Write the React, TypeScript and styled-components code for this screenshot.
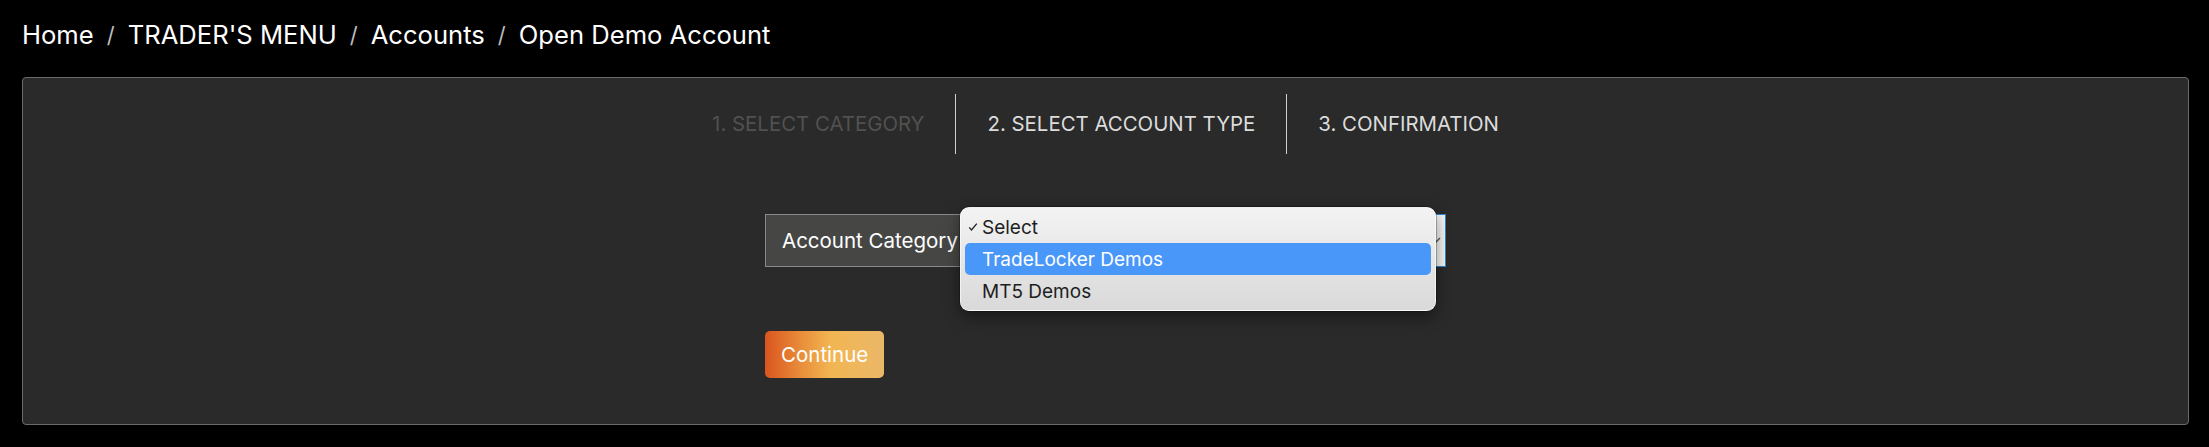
import { useState } from 'react';
import styled, { createGlobalStyle } from 'styled-components';

const GlobalStyle = createGlobalStyle`
	html, body {
		margin: 0;
		padding: 0;
		background: #000;
		font-family: Inter, 'Liberation Sans', Arial, sans-serif;
	}
	* {
		box-sizing: border-box;
	}
`;

const crumbs = ['Home', "TRADER'S MENU", 'Accounts', 'Open Demo Account'];
const steps = ['1. SELECT CATEGORY', '2. SELECT ACCOUNT TYPE', '3. CONFIRMATION'];
const categories = ['Select', 'TradeLocker Demos', 'MT5 Demos'];

const App = () => {
	const [activeStep] = useState(1);
	const [selected] = useState(0);
	const [hovered, setHovered] = useState(1);

	return (
		<Page>
			<GlobalStyle />
			<Breadcrumb>
				{crumbs.map((crumb, index) => (
					<Crumb key={crumb}>
						{index > 0 && <Divider>/</Divider>}
						{crumb}
					</Crumb>
				))}
			</Breadcrumb>

			<Card>
				<StepList>
					{steps.map((step, index) => (
						<Step key={step} $first={index === 0} $done={index < activeStep}>
							{step}
						</Step>
					))}
				</StepList>

				<Form>
					<InputGroup>
						<GroupLabel>Account Category</GroupLabel>
						<SelectBox>
							<Chevron viewBox='0 0 10 6'>
								<path d='M1 1l4 4 4-4' fill='none' stroke='#555' strokeWidth='1.4' />
							</Chevron>
							<Menu>
								{categories.map((option, index) => (
									<Option
										key={option}
										$active={index === hovered}
										onMouseEnter={() => setHovered(index)}
									>
										<Tick>
											{index === selected && (
												<svg viewBox='0 0 10 10' width='10' height='10'>
													<path
														d='M1.2 5.4l2.3 2.6L8.8 1.6'
														fill='none'
														stroke='currentColor'
														strokeWidth='1.3'
													/>
												</svg>
											)}
										</Tick>
										{option}
									</Option>
								))}
							</Menu>
						</SelectBox>
					</InputGroup>

					<ContinueButton>Continue</ContinueButton>
				</Form>
			</Card>
		</Page>
	);
};

export default App;

const Page = styled.div`
	width: 2209px;
	height: 447px;
	padding: 0 20px 0 22px;
	background: #000;
`;

const Breadcrumb = styled.ol`
	display: flex;
	align-items: center;
	height: 77px;
	margin: 0;
	padding: 0 0 8px 0;
	list-style: none;
`;

const Crumb = styled.li`
	display: flex;
	align-items: center;
	color: #fff;
	font-size: 25.6px;
`;

const Divider = styled.span`
	padding: 0 13px 0 13px;
	color: #bdbdbd;
	font-size: 22px;
`;

const Card = styled.div`
	height: 348px;
	padding-top: 16px;
	background: #2a2a2a;
	border: 1px solid #6a6a6a;
	border-radius: 4px;
`;

const StepList = styled.div`
	display: flex;
	justify-content: center;
`;

const Step = styled.div<{ $first: boolean; $done: boolean }>`
	height: 60px;
	line-height: 60px;
	padding: 0 31px;
	font-size: 20.4px;
	color: ${(p) => (p.$done ? '#515151' : '#dcdcdc')};
	border-left: ${(p) => (p.$first ? 'none' : '1px solid #d0d0d0')};
`;

const Form = styled.div`
	width: 681px;
	margin: 60px auto 0;
`;

const InputGroup = styled.div`
	display: flex;
	height: 53px;
`;

const GroupLabel = styled.div`
	display: flex;
	align-items: center;
	width: 196px;
	padding-left: 16px;
	background: #464745;
	border: 1px solid #8a8a8a;
	border-right: none;
	color: #fff;
	font-size: 20.5px;
	white-space: nowrap;
	overflow: hidden;
`;

const SelectBox = styled.div`
	position: relative;
	flex: 1;
	background: #f4f4f4;
	border: 1px solid #2f86d4;
`;

const Chevron = styled.svg`
	position: absolute;
	right: 4px;
	top: 22px;
	width: 10px;
	height: 6px;
`;

const Menu = styled.ul`
	position: absolute;
	top: -8px;
	left: -2px;
	width: 476px;
	margin: 0;
	padding: 3px 4px 3px;
	list-style: none;
	background: linear-gradient(#f3f3f3, #d9d9d9);
	border: 1px solid rgba(255, 255, 255, 0.6);
	border-radius: 9px;
	box-shadow: 0 6px 16px rgba(0, 0, 0, 0.45), 0 0 0 0.5px rgba(0, 0, 0, 0.5);
`;

const Option = styled.li<{ $active: boolean }>`
	display: flex;
	align-items: center;
	height: 32px;
	padding-left: 3px;
	border-radius: 5px;
	font-size: 19px;
	color: ${(p) => (p.$active ? '#fff' : '#1e1e1e')};
	background: ${(p) => (p.$active ? '#4a97fa' : 'transparent')};
`;

const Tick = styled.span`
	display: flex;
	align-items: center;
	width: 14px;
	color: #222;
`;

const ContinueButton = styled.button`
	display: block;
	height: 47px;
	margin-top: 64px;
	padding: 0 16px;
	border: none;
	border-radius: 5px;
	background: linear-gradient(90deg, #da551f 0%, #e98d3a 30%, #f2b552 55%, #ebb869 100%);
	color: #fff;
	font-family: Inter, 'Liberation Sans', Arial, sans-serif;
	font-size: 20.5px;
	cursor: pointer;
`;
